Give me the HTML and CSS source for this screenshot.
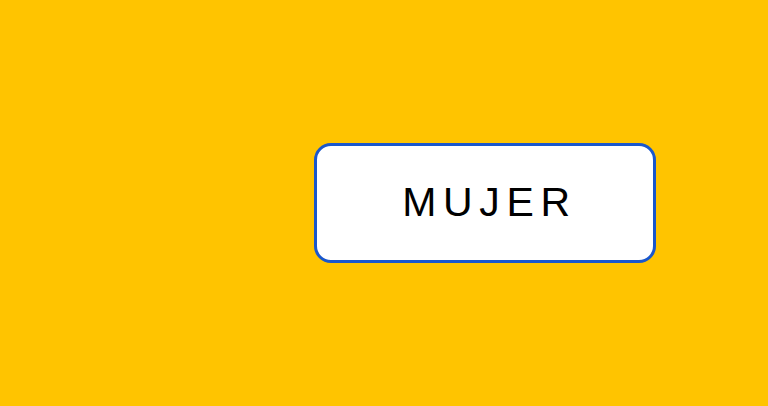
FILE: index.html
```html
<!DOCTYPE html>
<html>
<head>
<meta charset="utf-8">
<link rel="stylesheet" href="styles.css">
</head>
<body>
<div class="stage">
  <button class="choice">MUJER</button>
</div>
</body>
</html>
```
FILE: styles.css
```css
html, body {
  margin: 0;
  padding: 0;
  width: 768px;
  height: 406px;
  background: #ffc400;
  overflow: hidden;
}
.stage {
  display: flex;
  padding: 143px 0 0 314px;
}
.choice {
  box-sizing: border-box;
  width: 342px;
  height: 120px;
  background: #ffffff;
  border: 3px solid #1a57cc;
  border-radius: 17px;
  font-family: "Liberation Sans", Arial, sans-serif;
  font-size: 41px;
  letter-spacing: 6.7px;
  color: #000;
  padding: 0 0 2px 9px;
  display: flex;
  align-items: center;
  justify-content: center;
}
```
